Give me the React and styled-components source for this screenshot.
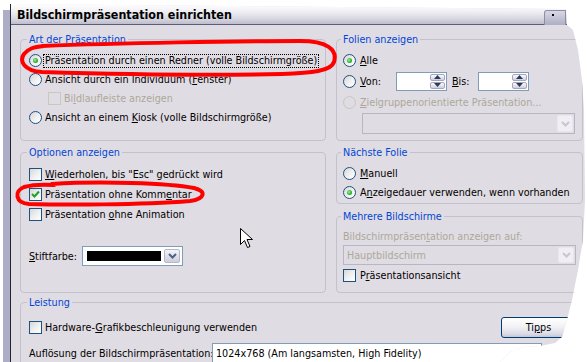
import React from "react";
import styled, { createGlobalStyle } from "styled-components";

const GlobalStyle = createGlobalStyle`
  html, body {
    margin: 0;
    padding: 0;
    background: #fff;
  }
  body {
    font-family: "DejaVu Sans Condensed", "Liberation Sans", sans-serif;
    font-size: 10.7px;
    color: #000;
  }
`;

const FACE = "#e0dce3";
const BLUE = "#0046d5";
const GRAYTEXT = "#aca899";

const Page = styled.div`
  position: relative;
  width: 587px;
  height: 362px;
  overflow: hidden;
  display: flex;
  background: #fff;
`;

const Shade = styled.div`
  flex: none;
  width: 7px;
  margin: 10px 0 0 3px;
  background: #aeadc8;
`;

const Dialog = styled.div`
  flex: none;
  width: 577px;
  height: 358px;
  margin-top: 4px;
  display: flex;
  flex-direction: column;
  box-sizing: border-box;
  border-left: 1px solid #26262e;
  background: ${FACE};
  clip-path: polygon(
    0 0, 556px 5px, 557px 21px, 563px 26px, 568px 46px, 572px 76px,
    574px 106px, 575px 196px, 573px 236px, 568px 266px, 562px 296px,
    557px 316px, 552px 333px, 545px 339px, 530px 342px, 513px 343px,
    500px 348px, 490px 358px, 0 358px
  );
`;

const TitleBar = styled.div`
  flex: none;
  height: 20px;
  display: flex;
  align-items: center;
  justify-content: space-between;
  padding: 0 21px 0 6px;
  border-bottom: 1px solid #5d5d7a;
  background: linear-gradient(to bottom, #ffffff 0%, #f1f1f5 35%, #d6d6e0 75%, #bdbdcc 100%);
`;

const Title = styled.span`
  font-family: "DejaVu Sans Condensed", "Liberation Sans", sans-serif;
  font-weight: bold;
  font-size: 12.4px;
  color: #000;
  white-space: nowrap;
`;

const HelpStub = styled.span`
  position: relative;
  width: 20px;
  height: 14px;
  margin-top: 6px;
  border-radius: 3px 0 0 0;
  border: 1px solid #8d8da8;
  border-bottom: none;
  background: linear-gradient(to bottom, #d8d8e4, #aeaec4);
  &::after {
    content: "";
    position: absolute;
    left: 7px;
    top: 3px;
    width: 2px;
    height: 2px;
    background: #000;
  }
`;

const Body = styled.div`
  flex: 1;
  padding: 8px 0 0 9px;
  display: flex;
  flex-direction: column;
  gap: 3px;
`;

const Columns = styled.div`
  display: grid;
  grid-template-columns: 306px 247px;
  column-gap: 10px;
`;

const Column = styled.div`
  display: flex;
  flex-direction: column;
  gap: ${(p) => p.$gap || 5}px;
`;

const Group = styled.fieldset`
  margin: 0;
  min-width: 0;
  box-sizing: border-box;
  height: ${(p) => p.$h}px;
  width: ${(p) => (p.$w ? `${p.$w}px` : "auto")};
  padding: ${(p) => p.$top || 5}px 0 0 ${(p) => p.$left || 8}px;
  border: 1px solid #c3c1cb;
  border-radius: 4px;
  display: flex;
  flex-direction: column;
`;

const Legend = styled.legend`
  padding: 0 2px;
  margin-left: -2px;
  line-height: 13px;
  color: ${BLUE};
  white-space: nowrap;
`;

const Row = styled.div`
  display: flex;
  align-items: center;
  height: ${(p) => p.$h || 19}px;
  padding-left: ${(p) => p.$indent || 0}px;
  color: ${(p) => (p.$disabled ? GRAYTEXT : "#000")};
  white-space: nowrap;
`;

const Label = styled.span`
  white-space: pre;
  line-height: 13px;
`;

const RadioDot = styled.span`
  flex: none;
  width: 13px;
  height: 13px;
  box-sizing: border-box;
  border-radius: 50%;
  border: 1px solid ${(p) => (p.$disabled ? "#cac8bb" : "#1c5180")};
  background: ${(p) =>
    p.$disabled ? "transparent" : "linear-gradient(135deg, #d6d5d9 0%, #f1f1f1 55%, #ffffff 100%)"};
  display: flex;
  align-items: center;
  justify-content: center;
  margin-right: ${(p) => p.$gap || 3}px;
  &::after {
    content: "";
    display: ${(p) => (p.$on ? "block" : "none")};
    width: 5px;
    height: 5px;
    border-radius: 50%;
    background: radial-gradient(circle at 40% 40%, #9ef09e 0%, #2eb52e 55%, #1d8f1d 100%);
  }
`;

const Box = styled.span`
  flex: none;
  width: 13px;
  height: 13px;
  box-sizing: border-box;
  border: 1px solid ${(p) => (p.$disabled ? "#cac8bb" : "#1c5180")};
  background: ${(p) =>
    p.$disabled ? "transparent" : "linear-gradient(135deg, #d6d5d9 0%, #f1f1f1 55%, #ffffff 100%)"};
  display: flex;
  align-items: center;
  justify-content: center;
  margin-right: ${(p) => p.$gap || 3}px;
`;

const Focus = styled.span`
  margin-left: -2px;
  padding: 0 1px;
  border: 1px dotted #000;
  line-height: 12px;
`;

const Field = styled.div`
  flex: none;
  display: flex;
  justify-content: flex-end;
  box-sizing: border-box;
  width: ${(p) => p.$w}px;
  height: ${(p) => p.$h || 19}px;
  margin: 0 ${(p) => p.$mr || 0}px 0 ${(p) => p.$ml || 0}px;
  padding: 1px;
  border: 1px solid #7f9db9;
  background: #fff;
`;

const SpinStack = styled.div`
  width: 15px;
  display: flex;
  flex-direction: column;
  gap: 1px;
`;

const SpinBtn = styled.span`
  flex: 1;
  display: flex;
  align-items: center;
  justify-content: center;
  box-sizing: border-box;
  border: 1px solid #a5a5bd;
  border-radius: 2px;
  background: linear-gradient(to bottom, #fbfbfd, #cfcfdd);
`;

const Combo = styled.div`
  flex: none;
  display: flex;
  box-sizing: border-box;
  width: ${(p) => p.$w}px;
  height: ${(p) => p.$h || 21}px;
  margin-left: ${(p) => p.$ml || 0}px;
  margin-top: ${(p) => p.$mt || 0}px;
  padding: ${(p) => p.$pad ?? 1}px;
  gap: 2px;
  border: 1px solid ${(p) => (p.$disabled ? "#b8b6c2" : "#7f9db9")};
  background: ${(p) => (p.$disabled ? "transparent" : "#fff")};
`;

const ComboText = styled.span`
  flex: 1;
  display: flex;
  align-items: center;
  padding-left: 2px;
  color: ${(p) => (p.$disabled ? GRAYTEXT : "#000")};
  white-space: nowrap;
  overflow: hidden;
`;

const Swatch = styled.span`
  flex: 1;
  margin: 2px 1px 2px 2px;
  background: #000;
`;

const DropBtn = styled.span`
  flex: none;
  width: 16px;
  display: flex;
  align-items: center;
  justify-content: center;
  box-sizing: border-box;
  border: 1px solid ${(p) => (p.$disabled ? "#e8e6ee" : "#b6b6cc")};
  border-radius: 2px;
  background: ${(p) =>
    p.$disabled ? "#f1eff4" : "linear-gradient(to bottom, #f4f4f8, #cdcddb)"};
`;

const Caption = styled.span`
  color: ${(p) => (p.$disabled ? GRAYTEXT : "#000")};
  width: ${(p) => (p.$w ? `${p.$w}px` : "auto")};
  flex: none;
  line-height: 13px;
  white-space: pre;
`;

const SpreadRow = styled(Row)`
  justify-content: space-between;
  padding-right: 6px;
`;

const Button = styled.button`
  width: 75px;
  height: 21px;
  padding: 0;
  font: inherit;
  color: #000;
  border: 1px solid #003c74;
  border-radius: 3px;
  background: linear-gradient(to bottom, #ffffff 0%, #f2f2f6 45%, #dadae6 85%, #c4c4d4 100%);
`;

const Overlay = styled.svg`
  position: absolute;
  left: 0;
  top: 0;
  pointer-events: none;
`;

const Check = () => (
  <svg width="9" height="9" viewBox="0 0 9 9">
    <path d="M1 4 L3.5 6.5 L8 1.5" fill="none" stroke="#21a121" strokeWidth="2" />
  </svg>
);

const Chevron = ({ disabled }) => (
  <svg width="9" height="6" viewBox="0 0 9 6">
    <path d="M1 1 L4.5 4.5 L8 1" fill="none" stroke={disabled ? "#c8c6d0" : "#4d6185"} strokeWidth="2" />
  </svg>
);

const Tri = ({ down }) => (
  <svg width="7" height="4" viewBox="0 0 7 4">
    <path d={down ? "M0 0 H7 L3.5 4 Z" : "M0 4 H7 L3.5 0 Z"} fill="#2b3a58" />
  </svg>
);

const Radio = ({ on, disabled, gap, children, h, indent }) => (
  <Row $disabled={disabled} $h={h} $indent={indent}>
    <RadioDot $on={on} $disabled={disabled} $gap={gap} />
    {children}
  </Row>
);

const CheckRow = ({ on, disabled, gap, children, h, indent }) => (
  <Row $disabled={disabled} $h={h} $indent={indent}>
    <Box $disabled={disabled} $gap={gap}>{on && <Check />}</Box>
    <Label>{children}</Label>
  </Row>
);

const SpinBox = ({ ml, mr }) => (
  <Field $w={51} $ml={ml} $mr={mr}>
    <SpinStack>
      <SpinBtn><Tri /></SpinBtn>
      <SpinBtn><Tri down /></SpinBtn>
    </SpinStack>
  </Field>
);

export default function App() {
  return (
    <>
      <GlobalStyle />
      <Page>
        <Shade />
        <Dialog>
          <TitleBar>
            <Title>Bildschirmpräsentation einrichten</Title>
            <HelpStub />
          </TitleBar>
          <Body>
            <Columns>
              <Column>
                <Group $h={108}>
                  <Legend>Art der Präsentation</Legend>
                  <Radio on>
                    <Focus>Präsentation durch einen Redner (volle Bildschirmgröße)</Focus>
                  </Radio>
                  <Radio><Label>Ansicht durch ein Individuum (<u>F</u>enster)</Label></Radio>
                  <CheckRow disabled indent={19}>Bi<u>l</u>dlaufleiste anzeigen</CheckRow>
                  <Radio><Label>Ansicht an einem <u>K</u>iosk (volle Bildschirmgröße)</Label></Radio>
                </Group>
                <Group $h={147}>
                  <Legend>Optionen anzeigen</Legend>
                  <CheckRow h={20}><u>W</u>iederholen, bis "Esc" gedrückt wird</CheckRow>
                  <CheckRow h={20} on>Präsentation ohne Komm<u>e</u>ntar</CheckRow>
                  <CheckRow h={20}>Präsentation <u>o</u>hne Animation</CheckRow>
                  <Row $h={20} style={{ marginTop: 22 }}>
                    <Caption $w={53}><u>S</u>tiftfarbe:</Caption>
                    <Combo $w={101} $h={20} $pad={2}>
                      <Swatch />
                      <DropBtn><Chevron /></DropBtn>
                    </Combo>
                  </Row>
                </Group>
              </Column>
              <Column>
                <Group $h={108} $left={6}>
                  <Legend>Folien anzeigen</Legend>
                  <Radio on gap={4}><Label><u>A</u>lle</Label></Radio>
                  <Radio gap={4} h={22}>
                    <Caption $w={36}><u>V</u>on:</Caption>
                    <SpinBox mr={5} />
                    <Caption $w={26}><u>B</u>is:</Caption>
                    <SpinBox />
                  </Radio>
                  <Radio disabled gap={4} h={20}>
                    <Label><u>Z</u>ielgruppenorientierte Präsentation...</Label>
                  </Radio>
                  <Combo $disabled $w={213} $ml={19} $mt={1}>
                    <ComboText $disabled />
                    <DropBtn $disabled><Chevron disabled /></DropBtn>
                  </Combo>
                </Group>
                <Group $h={58} $left={6}>
                  <Legend>Nächste Folie</Legend>
                  <Radio gap={4}><Label><u>M</u>anuell</Label></Radio>
                  <Radio on gap={4}><Label>A<u>n</u>zeigedauer verwenden, wenn vorhanden</Label></Radio>
                </Group>
                <Group $h={83} $left={6} $top={7} style={{ marginTop: 1 }}>
                  <Legend>Mehrere Bildschirme</Legend>
                  <Caption $disabled>Bildschirmpräsen<u>t</u>ation anzeigen auf:</Caption>
                  <Combo $disabled $w={233} $h={20} $mt={2}>
                    <ComboText $disabled>Hauptbildschirm</ComboText>
                    <DropBtn $disabled><Chevron disabled /></DropBtn>
                  </Combo>
                  <CheckRow gap={4} h={20}>P<u>r</u>äsentationsansicht</CheckRow>
                </Group>
              </Column>
            </Columns>
            <Group $h={80} $w={563} $top={6}>
              <Legend>Leistung</Legend>
              <SpreadRow $h={24}>
                <Row $h={24}>
                  <Box />
                  <Label>Hardware-<u>G</u>rafikbeschleunigung verwenden</Label>
                </Row>
                <Button>Ti<u>p</u>ps</Button>
              </SpreadRow>
              <Row $h={20} style={{ marginTop: 4 }}>
                <Caption $w={183}>Auflösung der Bildschirmpräsentation:</Caption>
                <Combo $w={330} $h={20}>
                  <ComboText>1024x768 (Am langsamsten, High Fidelity)</ComboText>
                </Combo>
              </Row>
            </Group>
          </Body>
        </Dialog>
        <Overlay width="587" height="362" viewBox="0 0 587 362">
          <g fill="none" stroke="#f00" strokeWidth="4" strokeLinecap="round" strokeLinejoin="round">
            <path d="M42 46 C120 43 240 41 300 41 C326 41 338 49 334 62 C331 71 312 73 282 74 C200 76 110 74 42 72 C24 71 19 61 24 54 C28 49 33 47 44 46" />
            <path d="M52 184 C100 181 168 183 194 188 C207 191 205 199 190 201 C140 205 62 205 29 204 C15 203 14 191 24 187 C31 185 40 184 54 185" />
          </g>
          <path
            d="M240.5 228.5 L240.5 244.5 L244.5 240.5 L247.5 247.5 L250 246.5 L247 239.5 L252.5 239.5 Z"
            fill="#fff"
            stroke="#000"
            strokeWidth="1"
          />
        </Overlay>
      </Page>
    </>
  );
}
